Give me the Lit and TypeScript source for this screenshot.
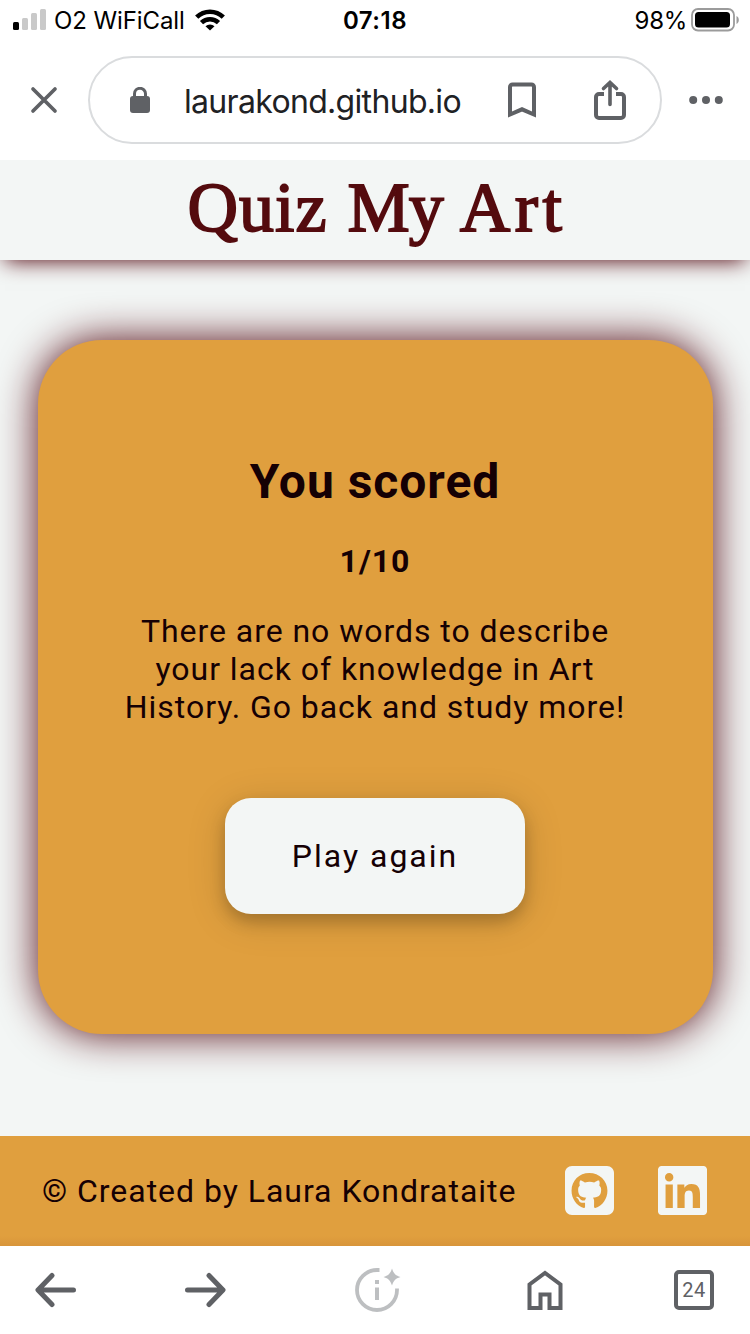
import { LitElement, html, css } from "lit";
import { customElement, property } from "lit/decorators.js";

@customElement("status-bar")
class StatusBar extends LitElement {
  static styles = css`
    :host { display: grid; grid-template-columns: 1fr auto 1fr; align-items: center; height: 40px; padding: 0 11px 0 13px; box-sizing: border-box; background: #fff; color: #000; font: 24px/30px Inter, "Liberation Sans", sans-serif; }
    .side { display: flex; align-items: center; }
    .end { justify-content: flex-end; }
    .signal { margin-right: 7px; }
    .wifi { margin-left: 10px; }
    .carrier, .time, .level { padding-top: 2px; }
    .carrier { letter-spacing: -0.1px; }
    .time { font-weight: 600; letter-spacing: 0.5px; margin-right: 2px; }
    .level { letter-spacing: -0.3px; margin-right: 4px; }
    svg { display: block; }
  `;
  render() {
    return html`
      <div class="side">
        <svg class="signal" width="34" height="24" viewBox="0 0 34 24">
          <rect x="0" y="14" width="6" height="8" rx="1.5" />
          <g fill="#c9c9c9">
            <rect x="9" y="10" width="6" height="12" rx="1.5" />
            <rect x="18" y="5" width="6" height="17" rx="1.5" />
            <rect x="27" y="1" width="6" height="21" rx="1.5" />
          </g>
        </svg>
        <span class="carrier">O2 WiFiCall</span>
        <svg class="wifi" width="30" height="22" viewBox="0 0 30 22">
          <g fill="none" stroke="#000" stroke-width="4.600">
            <path d="M1.7 8.2a19 19 0 0 1 26.6 0" />
            <path d="M6.5 13.6a12.3 12.3 0 0 1 17 0" />
          </g>
          <path d="M15 21.5l-4.500-4.200a6.500 6.500 0 0 1 9 0z" />
        </svg>
      </div>
      <span class="time">07:18</span>
      <div class="side end">
        <span class="level">98%</span>
        <svg width="48" height="24" viewBox="0 0 48 24">
          <rect x="1" y="1" width="42" height="21.5" rx="6" fill="none" stroke="#9b9b9b" stroke-width="1.8" />
          <rect x="4" y="4" width="35" height="15.5" rx="3.5" />
          <path d="M45.5 8v8c1.600-.8 2.300-2.200 2.300-4s-.7-3.200-2.300-4z" fill="#9b9b9b" />
        </svg>
      </div>
    `;
  }
}

@customElement("address-bar")
class AddressBar extends LitElement {
  @property() address = "";
  static styles = css`
    :host { display: flex; align-items: center; height: 120px; padding: 0 27px 0 30px; box-sizing: border-box; background: #fff; }
    .pill { display: flex; align-items: center; box-sizing: border-box; width: 574px; height: 88px; margin: 0 27px 0 30px; padding: 0 34px 0 40px; border: 2px solid #dadcde; border-radius: 44px; }
    .url { flex: 1; margin-left: 34px; padding-top: 3px; font: 32px/40px Inter, "Liberation Sans", sans-serif; letter-spacing: -0.68px; color: #202124; white-space: nowrap; }
    .share { margin-left: 56.5px; margin-right: 0.500px; }
    svg { display: block; flex: none; }
  `;
  render() {
    return html`
      <svg width="28" height="28" viewBox="0 0 28 28" stroke="#5f6165" stroke-width="3.7" stroke-linecap="round"><path d="M3 3l22 22M25 3L3 25" /></svg>
      <div class="pill">
        <svg width="20" height="26" viewBox="0 0 20 26">
          <rect y="9" width="20" height="17" rx="3" fill="#5f6165" />
          <path d="M4.500 12V6.800a5.500 5.500 0 0 1 11 0V12" fill="none" stroke="#5f6165" stroke-width="3" />
        </svg>
        <span class="url">${this.address}</span>
        <svg width="30" height="38" viewBox="0 0 30 38" fill="none" stroke="#5f6165" stroke-width="4">
          <path d="M3 33.500V6a2.500 2.500 0 0 1 2.500-2.500h19A2.500 2.500 0 0 1 27 6v27.500l-12-5.200z" />
        </svg>
        <svg class="share" width="32" height="40" viewBox="0 0 32 40" fill="none" stroke="#5f6165" stroke-width="4">
          <path d="M10 14H5a3 3 0 0 0-3 3v18a3 3 0 0 0 3 3h22a3 3 0 0 0 3-3V17a3 3 0 0 0-3-3h-5" />
          <path d="M16 24.500V3M9.500 8.500L16 2.500l6.500 6" stroke-width="3.600" stroke-linecap="round" />
        </svg>
      </div>
      <svg width="34" height="10" viewBox="0 0 34 10" fill="#5f6165"><circle cx="4.200" cy="5" r="4" /><circle cx="17" cy="5" r="4" /><circle cx="29.800" cy="5" r="4" /></svg>
    `;
  }
}

@customElement("quiz-result")
class QuizResult extends LitElement {
  static styles = css`
    :host { display: block; width: 675px; height: 694px; box-sizing: border-box; padding: 113px 80px 0; border-radius: 64px; background: #e09f3e; box-shadow: 0 0 40px #540b14; color: #150004; text-align: center; font: 32px/38px Roboto, sans-serif; letter-spacing: 0.96px; }
    .heading { margin: 0; font-size: 48px; line-height: 57px; font-weight: 700; }
    .score { margin: 32px 0; font-weight: 700; }
    .verdict { margin: 0; }
    .again { display: block; width: 300px; height: 116px; margin: 72px auto 0; padding: 0; border: 0; border-radius: 26px; background: #f3f6f5; color: #150004; font: inherit; letter-spacing: 2px; box-shadow: 0 8px 16px rgba(0, 0, 0, 0.2), 0 6px 40px rgba(0, 0, 0, 0.14); }
  `;
  render() {
    return html`
      <h2 class="heading">You scored</h2>
      <p class="score">1/10</p>
      <p class="verdict">There are no words to describe<br />your lack of knowledge in Art<br />History. Go back and study more!</p>
      <button class="again">Play again</button>
    `;
  }
}

@customElement("site-footer")
class SiteFooter extends LitElement {
  static styles = css`
    :host { display: flex; align-items: center; height: 110px; padding: 0 43px 0 42px; box-sizing: border-box; color: #150004; background: linear-gradient(to top, #d8953a, #e09f3e 10px); font: 32px/38px Roboto, sans-serif; letter-spacing: 0.97px; }
    .credit { flex: 1; white-space: nowrap; }
    .linkedin { margin-left: 44px; }
    svg { display: block; flex: none; margin-bottom: 2px; fill: #f3f6f5; }
  `;
  render() {
    return html`
      <span class="credit">© Created by Laura Kondrataite</span>
      <svg width="49" height="49" viewBox="0 32 448 448">
        <path d="M384 32H64C28.700 32 0 60.700 0 96v320c0 35.300 28.700 64 64 64h320c35.300 0 64-28.700 64-64V96c0-35.300-28.700-64-64-64zM277.3 415.7c-8.4 1.5-11.5-3.7-11.5-8 0-5.4.2-33 .2-55.3 0-15.6-5.2-25.5-11.3-30.7 37-4.1 76-9.2 76-73.1 0-18.2-6.5-27.3-17.1-39 1.7-4.3 7.4-22-1.700-45-13.9-4.300-45.700 17.900-45.700 17.900-13.200-3.700-27.500-5.600-41.600-5.600-14.100 0-28.400 1.900-41.600 5.600 0 0-31.800-22.200-45.700-17.900-9.100 22.900-3.500 40.600-1.700 45-10.600 11.700-15.600 20.800-15.600 39 0 63.600 37.300 69 74.300 73.100-4.800 4.300-9.100 11.700-10.600 22.300-9.500 4.300-33.800 11.700-48.300-13.900-9.100-15.800-25.500-17.100-25.500-17.100-16.200-.2-1.100 10.200-1.100 10.200 10.800 5 18.400 24.200 18.400 24.200 9.700 29.700 56.100 19.700 56.100 19.700 0 13.900.2 36.500.2 40.600 0 4.300-3 9.500-11.500 8-66-22.100-112.200-84.900-112.200-158.300 0-91.800 70.200-161.500 162-161.500S388 165.600 388 257.400c.1 73.400-44.700 136.300-110.700 158.300z" />
      </svg>
      <svg class="linkedin" width="49" height="49" viewBox="0 32 448 448">
        <path d="M416 32H31.900C14.300 32 0 46.500 0 64.300v383.400C0 465.500 14.300 480 31.900 480H416c17.600 0 32-14.500 32-32.300V64.300c0-17.800-14.400-32.300-32-32.300zM135.400 416H69V202.200h66.500V416zm-33.200-243c-21.300 0-38.500-17.300-38.500-38.500S80.900 96 102.200 96c21.200 0 38.500 17.300 38.500 38.500 0 21.300-17.200 38.500-38.500 38.500zm282.100 243h-66.400V312c0-24.800-.5-56.700-34.500-56.700-34.600 0-39.900 27-39.900 54.900V416h-66.400V202.200h63.700v29.200h.9c8.900-16.800 30.600-34.500 62.900-34.500 67.200 0 79.700 44.300 79.700 101.900V416z" />
      </svg>
    `;
  }
}

@customElement("browser-toolbar")
class BrowserToolbar extends LitElement {
  static styles = css`
    :host { display: flex; align-items: center; height: 88px; padding: 0 36px 0 34.500px; box-sizing: border-box; background: #fff; }
    .tabs { display: flex; align-items: center; justify-content: center; box-sizing: border-box; width: 40px; height: 40px; margin-left: auto; border: 4px solid #5f6165; border-radius: 5px; color: #5f6165; font: 400 20px/24px Roboto, sans-serif; letter-spacing: 0.5px; }
    .forward { margin-left: 107px; }
    .insight { margin-left: 128px; }
    .home { margin-left: 125px; }
    svg { display: block; flex: none; }
  `;
  render() {
    return html`
      <svg width="42" height="36" viewBox="0 0 42 36" fill="none" stroke="#5f6165" stroke-width="5" stroke-linecap="round" stroke-linejoin="round"><path d="M38.500 18H4M17 3.500L3 18l14 14.500" /></svg>
      <svg class="forward" width="42" height="36" viewBox="0 0 42 36" fill="none" stroke="#5f6165" stroke-width="5" stroke-linecap="round" stroke-linejoin="round"><path d="M3.500 18H38M25 3.500L39 18 25 32.500" /></svg>
      <svg class="insight" width="48" height="46" viewBox="0 0 48 46" fill="#bdbfc1">
        <path d="M25.500 3H23a20 20 0 1 0 20 20v-1.500" fill="none" stroke="#bdbfc1" stroke-width="3.800" />
        <rect x="21" y="13" width="4" height="4" /><rect x="21" y="20.500" width="4" height="12.500" />
        <path d="M38 1.500c1.800 5.200 3.300 6.700 8.500 8.500-5.200 1.800-6.700 3.300-8.500 8.500-1.800-5.200-3.300-6.700-8.500-8.500 5.200-1.800 6.700-3.300 8.500-8.500z" />
      </svg>
      <svg class="home" width="36" height="40" viewBox="0 0 36 40" fill="none" stroke="#5f6165" stroke-width="4"><path d="M2.500 38V14.500L18 3l15.500 11.500V38H22.500V24.500h-9V38z" /></svg>
      <div class="tabs">24</div>
    `;
  }
}

@customElement("app-root")
class AppRoot extends LitElement {
  static styles = css`
    :host { display: flex; flex-direction: column; width: 750px; height: 1334px; overflow: hidden; background: #f3f6f5; }
    .masthead { flex: none; display: flex; justify-content: center; height: 100px; box-shadow: 0 6px 20px -5px #540b14; background: #f3f6f5; clip-path: inset(0 0 -40px 0); }
    .title { display: flex; gap: 20px; margin: 0; font: 400 70px/95px "Liberation Serif", serif; color: #540b0e; -webkit-text-stroke: 1.8px #540b0e; }
    .quiz { letter-spacing: 1px; }
    .my { letter-spacing: -1px; }
    .art { letter-spacing: 4.500px; margin-left: -3px; margin-right: -4px; }
    .stage { flex: 1; display: flex; justify-content: center; align-items: flex-start; padding-top: 80px; box-sizing: border-box; }
  `;
  render() {
    return html`
      <status-bar></status-bar>
      <address-bar address="laurakond.github.io"></address-bar>
      <header class="masthead">
        <h1 class="title"><span class="quiz">Quiz</span><span class="my">My</span><span class="art">Art</span></h1>
      </header>
      <main class="stage"><quiz-result></quiz-result></main>
      <site-footer></site-footer>
      <browser-toolbar></browser-toolbar>
    `;
  }
}
